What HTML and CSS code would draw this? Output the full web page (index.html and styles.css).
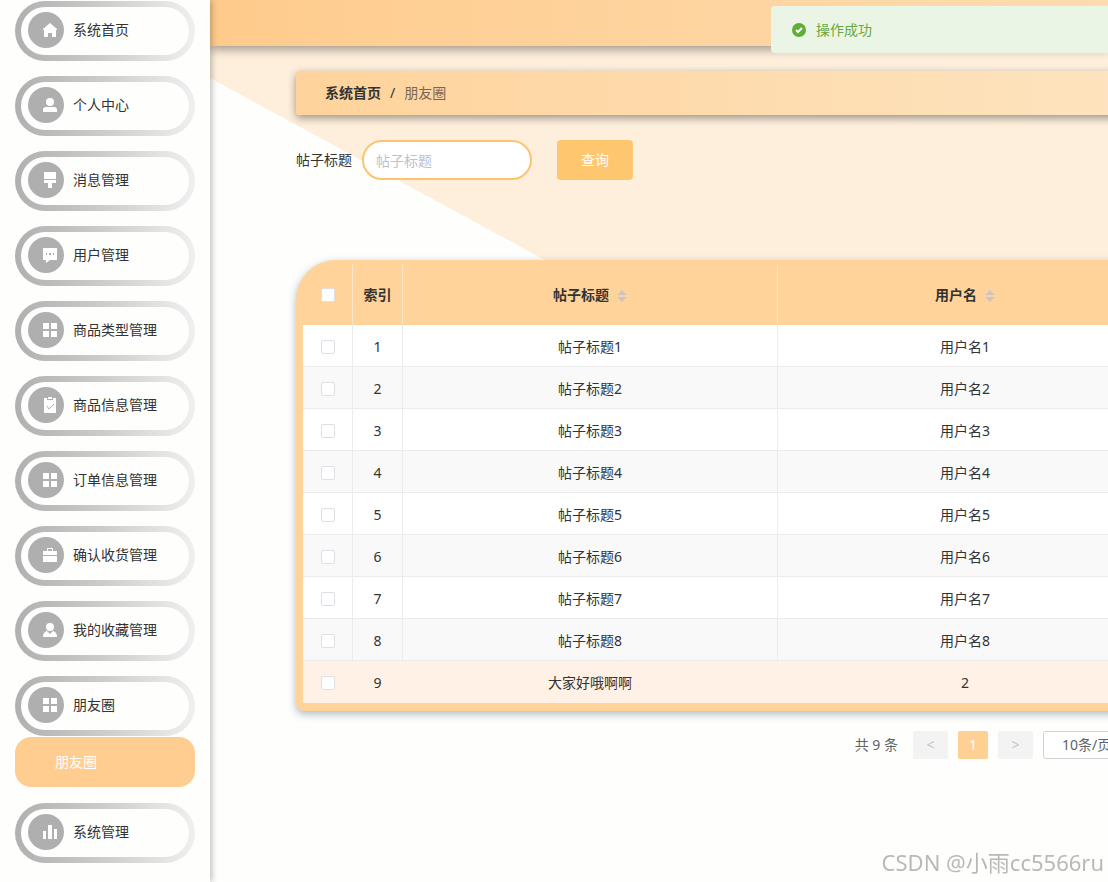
FILE: index.html
```html
<!DOCTYPE html>
<html lang="zh-CN">
<head>
  <meta charset="UTF-8" />
  <meta name="viewport" content="width=device-width, initial-scale=1.0"/>
  <title>朋友圈</title>
  <link rel="stylesheet" href="styles.css">
</head>
<body>

  <div class="layout">
    <nav class="sidebar">
      <ul class="menu">
        <li><a class="menu-item" href="#">
          <span class="menu-icon"><svg viewBox="0 0 16 16"><path d="M8 1 1 7v1h1v7h4v-4h4v4h4V8h1V7z"/></svg></span>系统首页</a></li>
        <li><a class="menu-item" href="#">
          <span class="menu-icon"><svg viewBox="0 0 16 16"><circle cx="8" cy="5" r="4"/><path d="M1 15v-2q0-3 3-3h8q3 0 3 3v2z"/></svg></span>个人中心</a></li>
        <li><a class="menu-item" href="#">
          <span class="menu-icon"><svg viewBox="0 0 16 16"><path d="M2 0h12v7H2zM2 8h12v3h-4v5H6v-5H2z"/></svg></span>消息管理</a></li>
        <li><a class="menu-item" href="#">
          <span class="menu-icon"><svg viewBox="0 0 16 16"><path fill-rule="evenodd" d="M1 1h14v12H8l-4 3v-3H1zM4 6v2h1V6zM7 6v2h2V6zM11 6v2h1V6z"/></svg></span>用户管理</a></li>
        <li><a class="menu-item" href="#">
          <span class="menu-icon"><svg viewBox="0 0 16 16"><path d="M1 1h6v6H1zM9 1h6v6H9zM1 9h6v6H1zM9 9h6v6H9z"/></svg></span>商品类型管理</a></li>
        <li><a class="menu-item" href="#">
          <span class="menu-icon"><svg viewBox="0 0 16 16"><path d="M2 1h3v2h6V1h3v15H2zM6 0h4v2H6z"/><path class="cut" d="m5 9 2 3 5-5"/></svg></span>商品信息管理</a></li>
        <li><a class="menu-item" href="#">
          <span class="menu-icon"><svg viewBox="0 0 16 16"><path d="M1 1h6v6H1zM9 1h6v6H9zM1 9h6v6H1zM9 9h6v6H9z"/></svg></span>订单信息管理</a></li>
        <li><a class="menu-item" href="#">
          <span class="menu-icon"><svg viewBox="0 0 16 16"><path fill-rule="evenodd" d="M5 1h6v3h4v4H1V4h4zM6 2v2h4V2zM1 9h14v6H1z"/></svg></span>确认收货管理</a></li>
        <li><a class="menu-item" href="#">
          <span class="menu-icon"><svg viewBox="0 0 16 16"><circle cx="8" cy="5" r="4"/><path d="M1 15q0-5 4-6l3 3 3-3q4 1 4 6z"/></svg></span>我的收藏管理</a></li>
        <li>
          <a class="menu-item" href="#">
          <span class="menu-icon"><svg viewBox="0 0 16 16"><path d="M1 1h6v6H1zM9 1h6v6H9zM1 9h6v6H1zM9 9h6v6H9z"/></svg></span>朋友圈</a>
          <a class="submenu-item" href="#">朋友圈</a>
        </li>
        <li><a class="menu-item" href="#">
          <span class="menu-icon"><svg viewBox="0 0 16 16"><path d="M1 7h3v8H1zM6 1h4v14H6zM12 5h3v10h-3z"/></svg></span>系统管理</a></li>
      </ul>
    </nav>

    <div class="main">
      <header class="topbar"></header>
      <main class="content">
        <div class="breadcrumb">
          <a href="#">系统首页</a>
          <span class="separator">/</span>
          <span class="current">朋友圈</span>
        </div>

        <form class="search">
          <label for="title">帖子标题</label>
          <input type="text" id="title" placeholder="帖子标题">
          <button type="button">查询</button>
        </form>

        <div class="table-card">
          <table>
            <colgroup>
              <col class="col-small">
              <col class="col-small">
              <col>
              <col>
            </colgroup>
            <thead>
              <tr>
                <th><input type="checkbox" aria-label="全选"></th>
                <th>索引</th>
                <th>帖子标题<svg class="sort" viewBox="0 0 10 12"><path d="M5 0l5 5H0zM5 12l5-5H0z"/></svg></th>
                <th>用户名<svg class="sort" viewBox="0 0 10 12"><path d="M5 0l5 5H0zM5 12l5-5H0z"/></svg></th>
              </tr>
            </thead>
            <tbody>
              <tr><td><input type="checkbox" aria-label="选择 1"></td><td>1</td><td>帖子标题1</td><td>用户名1</td></tr>
              <tr><td><input type="checkbox" aria-label="选择 2"></td><td>2</td><td>帖子标题2</td><td>用户名2</td></tr>
              <tr><td><input type="checkbox" aria-label="选择 3"></td><td>3</td><td>帖子标题3</td><td>用户名3</td></tr>
              <tr><td><input type="checkbox" aria-label="选择 4"></td><td>4</td><td>帖子标题4</td><td>用户名4</td></tr>
              <tr><td><input type="checkbox" aria-label="选择 5"></td><td>5</td><td>帖子标题5</td><td>用户名5</td></tr>
              <tr><td><input type="checkbox" aria-label="选择 6"></td><td>6</td><td>帖子标题6</td><td>用户名6</td></tr>
              <tr><td><input type="checkbox" aria-label="选择 7"></td><td>7</td><td>帖子标题7</td><td>用户名7</td></tr>
              <tr><td><input type="checkbox" aria-label="选择 8"></td><td>8</td><td>帖子标题8</td><td>用户名8</td></tr>
              <tr class="active"><td><input type="checkbox" aria-label="选择 9"></td><td>9</td><td>大家好哦啊啊</td><td>2</td></tr>
            </tbody>
          </table>
        </div>

        <div class="pagination">
          <span class="total">共 9 条</span>
          <button type="button" class="page-step" disabled>&lt;</button>
          <button type="button" class="page-number">1</button>
          <button type="button" class="page-step" disabled>&gt;</button>
          <select aria-label="每页条数">
            <option>10条/页</option>
          </select>
        </div>
      </main>
    </div>
  </div>

  <div class="message" role="alert">
    <svg viewBox="0 0 14 14"><circle cx="7" cy="7" r="7"/><path d="m4 7 2 2 4-4"/></svg>
    <span>操作成功</span>
  </div>

  <div class="watermark">CSDN @小雨cc5566ru</div>

</body>
</html>
```
FILE: styles.css
```css
* {
box-sizing: border-box;
}

body {
margin: 0;
font-family: "Noto Sans", "Noto Sans CJK SC", sans-serif;
font-size: 14px;
line-height: 20px;
color: #333;
background: #fefefd;
overflow: hidden;
}

a {
color: inherit;
text-decoration: none;
}

input,
button,
select {
font: inherit;
}

.layout {
display: flex;
min-height: 100vh;
}

/* Sidebar */
.sidebar {
flex: 0 0 210px;
padding: 1px 15px;
box-shadow: 2px 0 6px rgba(0, 0, 0, 0.25);
z-index: 1;
background: #fefefd;
}

.menu {
display: flex;
flex-direction: column;
gap: 15px;
margin: 0;
padding: 0;
list-style: none;
}

.menu-item {
display: flex;
align-items: center;
gap: 9px;
height: 60px;
padding: 0 7px 2px;
border: 6px solid transparent;
border-radius: 30px;
background: linear-gradient(#fefefd, #fefefd) padding-box, linear-gradient(90deg, #b0b0b0, #cdcdcd 50%, #f0f0f0) border-box;
}

.menu-icon {
display: flex;
align-items: center;
justify-content: center;
width: 36px;
height: 36px;
padding-left: 8px;
border-radius: 50%;
background: #afafaf;
}

.menu-icon svg {
width: 16px;
height: 16px;
fill: #fff;
}

.menu-icon .cut {
fill: none;
stroke: #afafaf;
}

.submenu-item {
display: flex;
align-items: center;
height: 50px;
margin: 1px 0;
padding-left: 40px;
border-radius: 16px;
color: #fff;
background: #ffcd90;
}

/* Main area */
.main {
flex: 1;
min-width: 0;
overflow: hidden;
}

.topbar {
position: relative;
height: 46px;
background: linear-gradient(90deg, #ffcb8c, #fedcb0);
box-shadow: 0 3px 10px rgba(0, 0, 0, 0.4);
}

.content {
padding: 25px 0 0 86px;
background: linear-gradient(to top right, transparent 50%, #feefdc 50%) 0 32px / 100% 488px no-repeat, linear-gradient(#feefdc, #feefdc) 0 0 / 100% 32px no-repeat;
}

.breadcrumb {
display: flex;
align-items: center;
gap: 9px;
min-width: 864px;
height: 44px;
padding: 0 29px;
border-radius: 4px;
background: linear-gradient(90deg, #ffd39b, #fde4c0);
box-shadow: 0 3px 8px rgba(0, 0, 0, 0.4);
}

.breadcrumb a {
font-weight: bold;
}

.breadcrumb .current {
color: #7b6650;
}

.search {
display: flex;
align-items: center;
gap: 10px;
margin: 25px 0 80px;
}

.search input {
width: 170px;
height: 40px;
padding: 0 12px;
border: 2px solid #fdc470;
border-radius: 20px;
background: #fff;
}

.search input::placeholder {
color: #c0c0cc;
}

.search button {
width: 76px;
height: 40px;
margin-left: 15px;
border: 0;
border-radius: 4px;
color: #fff;
background: #ffc670;
}

/* Table */
.table-card {
min-width: 864px;
padding: 5px 7px 8px;
border-radius: 40px 40px 8px 8px;
background: #ffd39a;
box-shadow: 0 3px 9px rgba(60, 80, 90, 0.4);
}

table {
width: 100%;
table-layout: fixed;
border-collapse: separate;
border-spacing: 0;
text-align: center;
}

.col-small {
width: 50px;
}

th,
td {
padding: 0;
border-right: 1px solid #ececec;
}

th {
height: 60px;
border-color: #fbe5c8;
}

td {
height: 42px;
padding-top: 2px;
border-bottom: 1px solid #ebebeb;
background: #fff;
}

tr:nth-child(even) td {
background: #f9f9f9;
}

.active td {
border-right-color: #fff1e5;
border-bottom-color: #fff1e5;
background: #fff1e5;
}

table input {
appearance: none;
display: block;
width: 14px;
height: 14px;
margin: 0 auto;
border: 1px solid #dcdfe6;
border-radius: 2px;
background: #fff;
}

.sort {
width: 10px;
height: 12px;
margin-left: 8px;
vertical-align: -2px;
fill: #cdc3c3;
}

/* Pagination */
.pagination {
display: flex;
align-items: center;
justify-content: flex-end;
gap: 10px;
min-width: 864px;
margin-top: 20px;
}

.pagination .total {
margin-right: 5px;
color: #606266;
}

.pagination button {
height: 28px;
padding: 0;
border: 0;
border-radius: 2px;
}

.page-step {
width: 35px;
color: #c0c4cc;
background: #f3f3f3;
}

.page-number {
width: 30px;
color: #fff;
background: #ffd093;
}

.pagination select {
appearance: none;
width: 117px;
height: 28px;
padding: 0 18px;
border: 1px solid #d2d2d2;
border-radius: 3px;
color: #606266;
background: #fff;
}

/* Toast above the page */
.message {
position: fixed;
top: 6px;
left: 771px;
z-index: 2;
display: flex;
align-items: center;
gap: 10px;
width: 380px;
height: 47px;
padding: 0 21px;
border-radius: 4px;
color: #67a83e;
background: #ebf5e6;
}

.message svg {
width: 14px;
height: 14px;
fill: #5fae35;
}

.message path {
fill: none;
stroke: #fff;
stroke-width: 2;
}

.watermark {
position: fixed;
right: 4px;
bottom: 6px;
z-index: 2;
font-size: 22px;
line-height: 28px;
color: #b9b9b9;
}
```
